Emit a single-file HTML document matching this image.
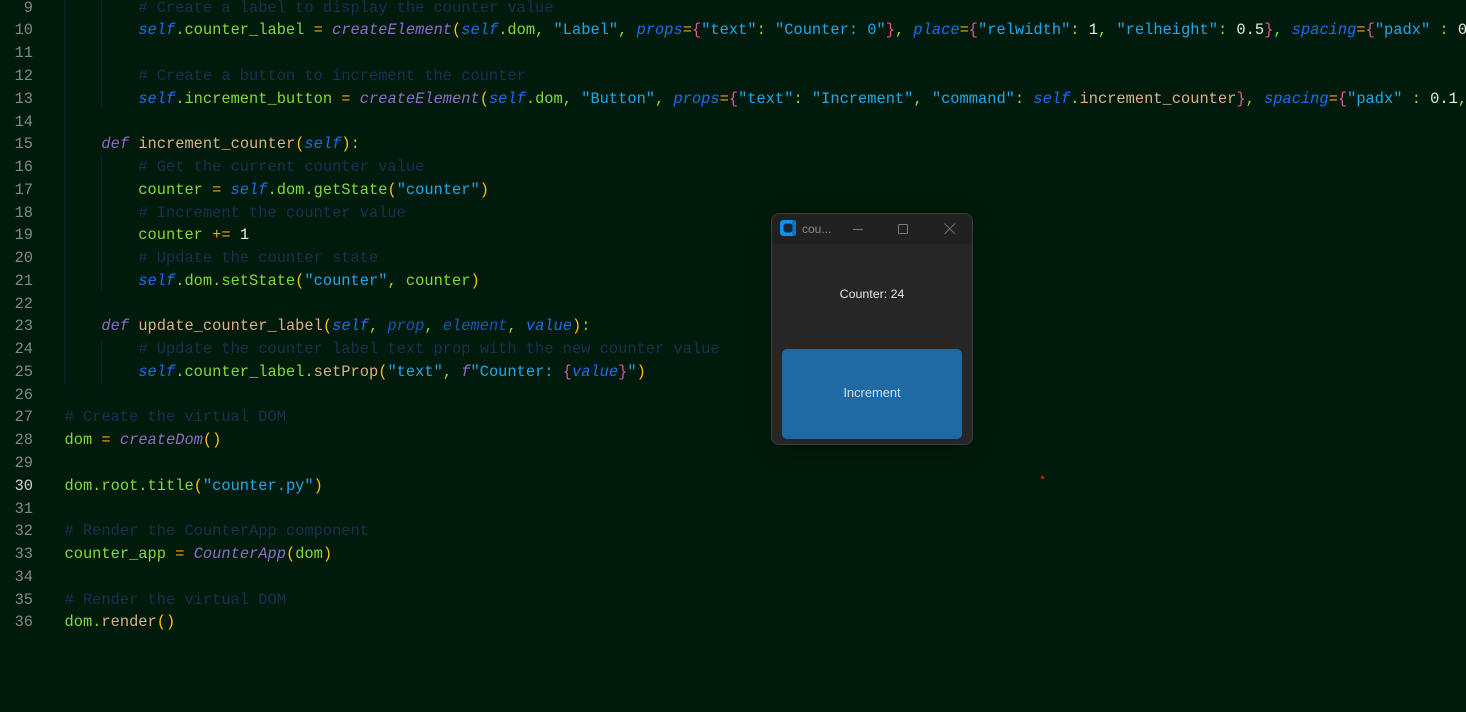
<!DOCTYPE html>
<html><head><meta charset="utf-8"><style>
html,body{margin:0;padding:0;width:1466px;height:712px;overflow:hidden;background:#001b0b}
#code{position:absolute;left:64.5px;top:-3.3px;width:1401px;font:15.39px/22.78px "Liberation Mono",monospace;color:#7edb3a;height:690px;overflow:hidden}
#code div{height:22.78px;white-space:pre}
#nums{position:absolute;left:0;width:33px;top:-3.3px;text-align:right;font:15.34px/22.78px "Liberation Mono",monospace;color:#808a84}
#nums div{height:22.78px}
.c{color:#1a2e52}.s{color:#1c6cf5;font-style:italic}.g{color:#7edb3a}.t{color:#dcb083}.q{color:#1fa8ee}
.n{color:#e2f2e0}.o{color:#f5a50a}.y{color:#f7c008}.p{color:#e2559a}.f{color:#8f6cc8;font-style:italic}
.a{color:#1658b8;font-style:italic}.b{color:#1c6cf5;font-style:italic}.d{color:#8a68c8;font-style:italic}
.gd{position:absolute;width:1px;background:#0a2530}
#win{position:absolute;left:771px;top:213px;width:200px;height:230px;background:#262626;border:1px solid #3b3d3b;border-radius:8px;box-shadow:0 4px 24px rgba(0,0,0,.35);overflow:hidden;font-family:"Liberation Sans",sans-serif}
#tb{position:absolute;left:0;top:0;width:200px;height:30px;background:#212121}
#ttl{position:absolute;left:30px;top:8px;font-size:12px;line-height:14px;color:#8a8a8a}
#lbl{position:absolute;left:0;width:200px;top:72px;text-align:center;font-size:12.4px;line-height:16px;color:#e6e6e6}
#btn{position:absolute;left:10px;top:135px;width:180px;height:90px;background:#1f6aa5;border-radius:5px;text-align:center;font-size:12.9px;line-height:88px;color:#d2dde6}
#dot{position:absolute;left:1041px;top:476px;width:3px;height:3px;border-radius:50%;background:#e8141c}
</style></head><body>
<div class="gd" style="left:64px;top:0;height:385px"></div>
<div class="gd" style="left:101px;top:0;height:110px"></div>
<div class="gd" style="left:101px;top:156px;height:134px"></div>
<div class="gd" style="left:101px;top:338px;height:47px"></div>
<div id="nums"><div>9</div><div>10</div><div>11</div><div>12</div><div>13</div><div>14</div><div>15</div><div>16</div><div>17</div><div>18</div><div>19</div><div>20</div><div>21</div><div>22</div><div>23</div><div>24</div><div>25</div><div>26</div><div>27</div><div>28</div><div>29</div><div style="color:#d4d8d4">30</div><div>31</div><div>32</div><div>33</div><div>34</div><div>35</div><div>36</div></div>
<div id="code">
<div>        <span class="c"># Create a label to display the counter value</span></div>
<div>        <span class="s">self</span>.counter_label <span class="o">=</span> <span class="f">createElement</span><span class="y">(</span><span class="s">self</span>.dom, <span class="q">"Label"</span>, <span class="b">props</span><span class="o">=</span><span class="p">{</span><span class="q">"text"</span>: <span class="q">"Counter: 0"</span><span class="p">}</span>, <span class="b">place</span><span class="o">=</span><span class="p">{</span><span class="q">"relwidth"</span>: <span class="n">1</span>, <span class="q">"relheight"</span>: <span class="n">0.5</span><span class="p">}</span>, <span class="b">spacing</span><span class="o">=</span><span class="p">{</span><span class="q">"padx"</span> : <span class="n">0</span></div>
<div> </div>
<div>        <span class="c"># Create a button to increment the counter</span></div>
<div>        <span class="s">self</span>.increment_button <span class="o">=</span> <span class="f">createElement</span><span class="y">(</span><span class="s">self</span>.dom, <span class="q">"Button"</span>, <span class="b">props</span><span class="o">=</span><span class="p">{</span><span class="q">"text"</span>: <span class="q">"Increment"</span>, <span class="q">"command"</span>: <span class="s">self</span>.<span class="t">increment_counter</span><span class="p">}</span>, <span class="b">spacing</span><span class="o">=</span><span class="p">{</span><span class="q">"padx"</span> : <span class="n">0.1</span>,</div>
<div> </div>
<div>    <span class="d">def</span> <span class="t">increment_counter</span><span class="y">(</span><span class="s">self</span><span class="y">)</span>:</div>
<div>        <span class="c"># Get the current counter value</span></div>
<div>        counter <span class="o">=</span> <span class="s">self</span>.dom.getState<span class="y">(</span><span class="q">"counter"</span><span class="y">)</span></div>
<div>        <span class="c"># Increment the counter value</span></div>
<div>        counter <span class="o">+=</span> <span class="n">1</span></div>
<div>        <span class="c"># Update the counter state</span></div>
<div>        <span class="s">self</span>.dom.setState<span class="y">(</span><span class="q">"counter"</span>, counter<span class="y">)</span></div>
<div> </div>
<div>    <span class="d">def</span> <span class="t">update_counter_label</span><span class="y">(</span><span class="s">self</span>, <span class="a">prop</span>, <span class="a">element</span>, <span class="b">value</span><span class="y">)</span>:</div>
<div>        <span class="c"># Update the counter label text prop with the new counter value</span></div>
<div>        <span class="s">self</span>.counter_label.<span class="t">setProp</span><span class="y">(</span><span class="q">"text"</span>, <span class="f">f</span><span class="q">"Counter: </span><span class="p">{</span><span class="b">value</span><span class="p">}</span><span class="q">"</span><span class="y">)</span></div>
<div> </div>
<div><span class="c"># Create the virtual DOM</span></div>
<div>dom <span class="o">=</span> <span class="f">createDom</span><span class="y">()</span></div>
<div> </div>
<div>dom.root.title<span class="y">(</span><span class="q">"counter.py"</span><span class="y">)</span></div>
<div> </div>
<div><span class="c"># Render the CounterApp component</span></div>
<div>counter_app <span class="o">=</span> <span class="f">CounterApp</span><span class="y">(</span>dom<span class="y">)</span></div>
<div> </div>
<div><span class="c"># Render the virtual DOM</span></div>
<div>dom.<span class="t">render</span><span class="y">()</span></div>
</div>
<div id="win">
<div id="tb">
<svg style="position:absolute;left:8px;top:6px" width="16" height="16" viewBox="0 0 16 16"><rect width="16" height="16" rx="3.5" fill="#0a94f0"/><rect x="12" width="4" height="16" rx="2" fill="#0674c8"/><rect x="3.5" y="3.5" width="9" height="9" rx="2.5" fill="#13293a"/></svg>
<div id="ttl">cou...</div>
<svg style="position:absolute;left:80px;top:8px" width="60" height="14" viewBox="0 0 60 14" fill="none" stroke="#7a7a7a" stroke-width="1"><path d="M1 7.5H11"/><rect x="46.5" y="2.5" width="9" height="9" rx="1"/></svg>
<svg style="position:absolute;left:171px;top:8px" width="14" height="14" viewBox="0 0 14 14" fill="none" stroke="#6e6e6e" stroke-width="1"><path d="M1.5 1.5L12 12M12 1.5L1.5 12"/></svg>
</div>
<div id="lbl">Counter: 24</div>
<div id="btn">Increment</div>
</div>
<div id="dot"></div>
</body></html>
